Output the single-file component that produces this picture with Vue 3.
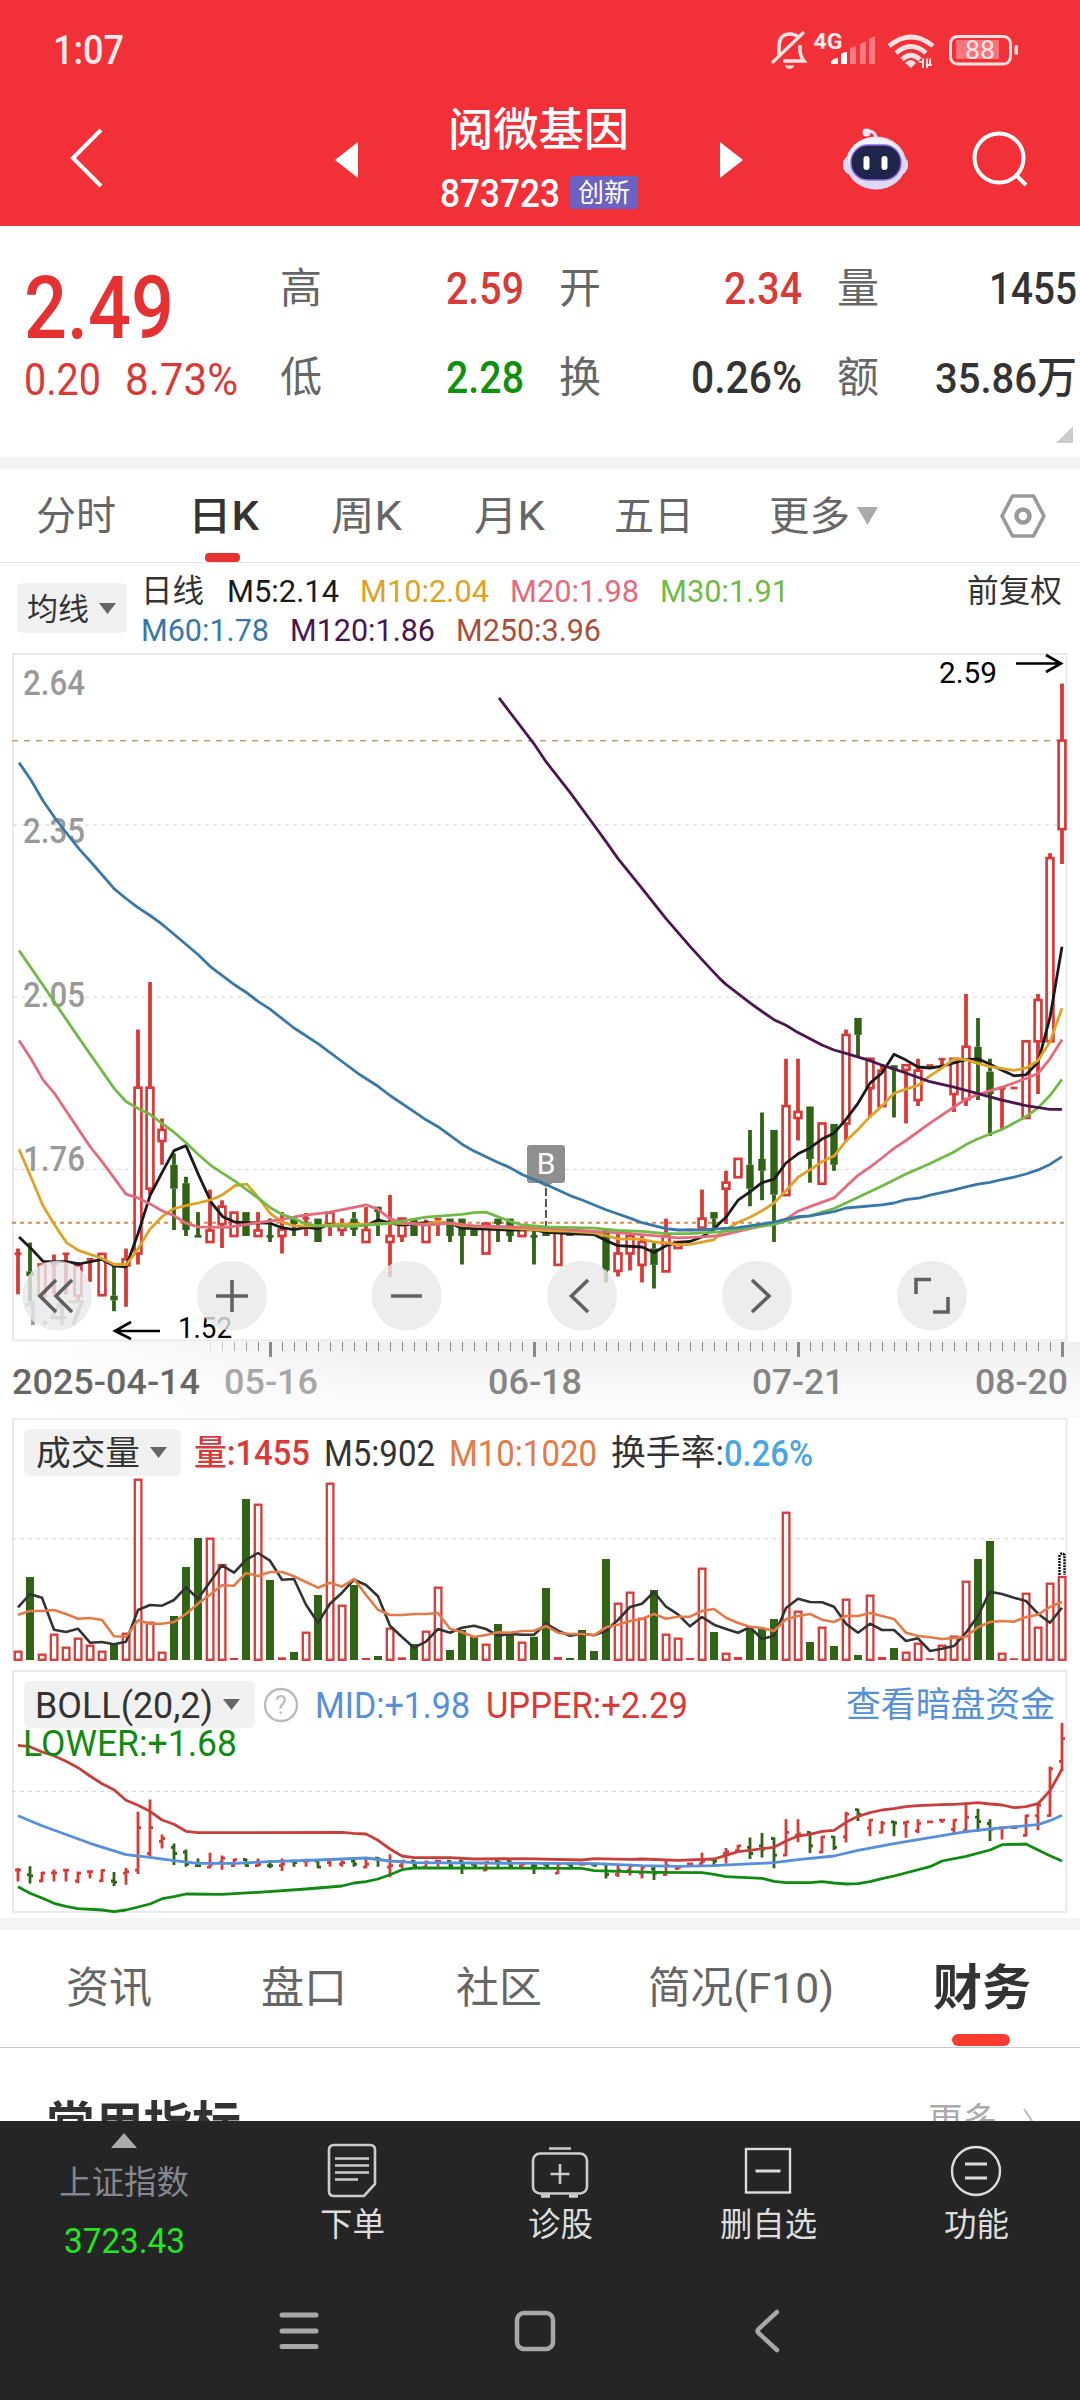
<script setup>
import { h } from 'vue'

// Single line of text fitted to a known advance width.
const Fit = (p) =>
  h('svg', { class: 'fit', width: p.w, height: p.s }, [
    h('text', {
      x: 0, y: p.s * 0.86, 'font-size': p.s, 'font-weight': p.b || 400, fill: p.c || '#333',
      textLength: p.w, lengthAdjust: 'spacingAndGlyphs',
    }, p.t),
  ])
Fit.props = ['t', 's', 'w', 'c', 'b']

const RED = '#d83a38', GREEN = '#316317'
const n1 = (v) => Math.round(v * 10) / 10
const cx = (i) => 18 + 12 * i
const ky = (v) => n1(v / 2.1778 - 10)

// [direction, body top, body bottom, high, low]
const days = [
  'r 1336 1336 1325 1425', 'g 1375 1385 1312 1440', 'r 1360 1428', 'r 1359 1359 1338 1425', 'r 1336 1336 1336 1425',
  'r 1362 1428 1355 1438', 'r 1348 1348 1348 1398', 'r 1337 1427', 'g 1428 1438 1360 1462', 'r 1349 1362 1325 1452',
  'r 975 1336 848 1360', 'r 975 1195 745 1208', 'r 1067 1091 1042 1143', 'g 1143 1195 1118 1285', 'g 1183 1285 1169 1298',
  'g 1298 1298 1246 1298', 'r 1286 1311 1197 1311', 'r 1234 1272 1220 1324', 'r 1247 1298', 'g 1246 1298',
  'r 1286 1298 1246 1298', 'g 1298 1298 1260 1311', 'r 1284 1298 1246 1336', 'g 1260 1272 1260 1298', 'r 1259 1259 1248 1298',
  'g 1260 1311', 'r 1247 1272 1247 1298', 'r 1272 1285 1260 1298', 'g 1260 1285 1246 1298', 'r 1285 1311 1235 1311',
  'g 1234 1246 1234 1298', 'r 1298 1311 1209 1387', 'r 1260 1298 1260 1311', 'g 1260 1298', 'r 1272 1311 1262 1311',
  'r 1260 1260 1260 1298', 'g 1260 1298 1260 1311', 'g 1260 1298 1260 1360', 'g 1285 1298', 'r 1271 1336',
  'g 1260 1272 1260 1311', 'g 1260 1298 1260 1311', 'r 1285 1298', 'g 1298 1298 1285 1360', 'g 1285 1298',
  'r 1285 1361', 'g 1285 1298', 'r 1287 1287', 'g 1287 1296', 'g 1285 1373 1285 1399',
  'r 1336 1374 1290 1386', 'r 1298 1336 1290 1373', 'r 1311 1361 1298 1399', 'g 1325 1361 1312 1412', 'r 1298 1375 1260 1375',
  'r 1311 1324', 'r 1284 1284', 'r 1260 1280 1197 1280', 'g 1246 1260 1246 1285', 'r 1182 1195 1156 1272',
  'r 1130 1170', 'g 1143 1195 1067 1233', 'g 1130 1156 1029 1220', 'g 1067 1208 1067 1311', 'r 1015 1209 912 1209',
  'r 1028 1041 912 1090', 'g 1016 1130 1016 1182', 'r 1053 1184', 'g 1054 1143 1054 1156', 'r 860 1053 848 1092',
  'g 823 860 823 910', 'r 912 976 912 1040', 'r 938 1015 927 1015', 'g 926 936 926 1040', 'r 926 936 926 1053',
  'r 938 1002 912 1015', 'r 926 926', 'r 912 912 912 926', 'r 912 989 912 1028', 'r 886 1000 771 1015',
  'g 886 923 823 1002', 'g 940 989 912 1080', 'r 976 976 976 1067', 'r 975 975', 'r 874 1041',
  'r 784 874 771 989', 'r 475 874 464 874', 'r 219 412 95 488',
].map((row, i) => {
  const [d, t, b, hi, lo] = row.split(' ')
  const top = +t, bot = +b
  return { i, x: cx(i), up: d === 'r', top, bot, hi: hi ? +hi : top, lo: lo ? +lo : bot }
})

const candles = days.map((d) => {
  const t = ky(d.top), b = ky(d.bot), hi = ky(d.hi), lo = ky(d.lo)
  let wick = ''
  if (t - hi > 0.5) wick += `M${d.x} ${hi}V${t}`
  if (lo - b > 0.5) wick += `M${d.x} ${b}V${lo}`
  const flat = b - t < 1.5
  return { ...d, wick, flat, t: n1(t), h: n1(Math.max(b - t, 2)) }
})

// Moving averages; each third of the chart is listed separately.
const trace = (...parts) =>
  parts.map((s, k) => s.trim().split(/\s+/).map((p) => {
    const [x, y] = p.split(',')
    const off = parts.length === 3 ? k : k + 1
    return n1(off * 360 + x / 3) + ',' + ky(+y)
  }).join(' ')).join(' ')

const averages = [
  ['#1a1a1a', trace(
    '57,1300 93,1325 129,1353 200,1354 237,1359 306,1349 343,1363 378,1365 414,1293 450,1210 486,1160 522,1112 558,1101 594,1162 634,1225 668,1256 706,1268 810,1270 846,1280 882,1284 918,1279 954,1282 990,1272',
    '18,1275 54,1263 90,1270 126,1274 198,1269 270,1270 306,1281 450,1285 522,1284 558,1290 630,1293 702,1295 738,1308 774,1319 846,1322 882,1334 918,1319 954,1312 990,1310 1026,1300 1062,1283',
    '0,1269 18,1257 54,1220 90,1202 126,1182 162,1174 198,1139 234,1119 270,1106 306,1087 342,1074 378,1044 414,1009 450,965 486,943 522,902 558,915 594,930 630,932 668,928 702,921 738,914 774,912 810,924 846,937 882,949 918,947 954,920 990,822 1026,668')],
  ['#dda226', trace(
    '57,1109 93,1170 129,1232 165,1275 200,1313 237,1330 280,1340 306,1347 343,1360 380,1360 414,1326 450,1283 486,1256 522,1238 558,1232 594,1226 634,1219 668,1208 706,1188 740,1185 774,1213 810,1248 846,1268 882,1276 954,1276 1018,1272',
    '18,1273 90,1270 198,1272 234,1266 306,1275 450,1281 558,1286 630,1288 702,1291 738,1297 774,1304 846,1305 882,1311 918,1313 954,1317 990,1316 1026,1311 1062,1306',
    '0,1292 18,1284 54,1268 90,1257 126,1243 162,1226 198,1199 234,1170 270,1154 306,1136 342,1124 378,1091 414,1066 450,1038 486,1015 522,987 558,978 594,970 630,949 668,931 702,912 738,914 774,922 810,929 882,937 918,932 954,916 990,875 1026,802')],
  ['#e56a7c', trace(
    '57,872 93,912 129,958 162,986 234,1064 270,1103 306,1136 378,1207 414,1215 450,1228 486,1243 522,1254 558,1270 594,1278 680,1279 774,1269 846,1262 900,1254 990,1246',
    '0,1233 18,1230 54,1240 90,1260 126,1269 198,1274 270,1270 342,1276 450,1278 558,1281 702,1288 800,1292 882,1297 954,1302 1026,1300',
    '0,1297 54,1288 90,1282 162,1270 200,1260 234,1244 270,1234 342,1215 378,1190 414,1166 450,1148 486,1128 522,1107 558,1090 630,1052 702,1017 738,1000 774,990 846,974 918,955 954,944 990,912 1026,870')],
  ['#70ba47', trace(
    '57,676 129,752 237,867 343,977 378,1005 414,1020 450,1033 486,1053 522,1072 558,1095 594,1120 634,1145 706,1179 774,1215 810,1236 846,1251 882,1260 918,1272 954,1276 1062,1277',
    '90,1270 198,1257 306,1251 342,1247 378,1246 414,1256 450,1266 486,1274 558,1278 702,1281 774,1286 846,1288 918,1293 990,1293',
    '0,1289 54,1284 90,1280 162,1273 234,1258 270,1254 342,1238 378,1226 486,1189 558,1163 630,1140 702,1115 738,1099 774,1086 846,1066 918,1038 954,1019 990,992 1026,957')],
  ['#3878a6', trace(
    '57,267 93,305 129,350 170,393 237,455 272,483 343,542 378,563 414,583 450,600 486,619 522,641 594,685 634,713 706,752 738,767 774,787 810,804 882,845 954,879 1026,918',
    '0,947 54,972 90,992 162,1027 198,1045 234,1060 306,1098 342,1113 414,1138 450,1149 486,1164 558,1186 630,1210 668,1220 738,1241 810,1259 846,1269 918,1282 954,1285 1020,1285',
    '0,1282 54,1280 162,1268 234,1256 270,1254 342,1245 378,1237 486,1230 522,1226 558,1219 600,1215 630,1209 700,1198 738,1191 774,1185 810,1181 846,1175 882,1170 918,1163 954,1154 990,1142 1026,1125')],
  ['#4b1650', trace(
    '417,126 522,226 558,265 630,332 704,405 738,439 774,476 846,541 918,607 990,667 1026,696',
    '0,738 18,750 90,790 126,809 162,827 198,839 234,855 306,882 342,893 378,900 450,916 486,926 558,943 630,962 702,974 774,988 846,1002 918,1014 990,1022 1026,1022')],
]

const priceMarks = [['2.64', 23, 43], ['2.35', 23, 191], ['2.05', 23, 355], ['1.76', 23, 519], ['1.47', 23, 673]]
const gridLines = [403, 778, 1153].map(ky)

// Volume tops, in thirds of a pixel from the panel's origin.
const vy = (v) => n1(v / 3 - 98)
const volume = (
  '992 771 1001 941 980 953 974 992 974 938 476 905 995 888 741 654 653 732 1014 537 551 780 1012 996 935 825 488 854 795 1014 ' +
  '1008 923 1012 972 932 800 990 930 948 971 912 943 965 950 804 1011 1014 930 993 717 848 815 893 810 941 953 1014 743 936 998 ' +
  '1011 927 927 897 575 872 966 920 978 836 1005 824 1011 984 995 968 1015 974 947 782 717 663 998 1015 818 920 788 768'
).split(' ').map((v, i) => {
  const y = vy(+v)
  return { i, x: cx(i), y, h: n1(242 - y), up: !(
    [1, 8, 13, 14, 15, 19, 21, 23, 25, 28, 30, 33, 36, 37, 38, 40, 41, 43, 44, 46, 47, 48, 49, 53, 58, 61, 62, 63, 66, 68, 70, 73, 80, 81].includes(i)) }
})
const vline = (s) => s.split(' ').map((v, i) => cx(i) + ',' + vy(+v)).join(' ')
const vol5 = vline('862 822 833 929 936 926 968 966 973 965 870 855 857 840 802 836 786 736 758 720 699 722 779 777 854 908 851 818 779 795 829 917 951 983 965 927 938 923 917 927 947 942 944 944 911 932 947 941 946 932 900 861 851 816 860 883 919 891 914 927 938 922 957 947 864 836 846 847 860 911 938 911 930 930 963 955 993 986 978 938 887 815 822 833 843 881 908 863')
const vol10 = vline('884 873 873 870 882 896 894 900 949 950 901 911 911 906 882 851 824 796 797 759 768 756 756 769 786 803 788 800 777 825 869 885 885 882 882 879 926 937 951 945 937 938 933 932 918 938 942 942 946 922 914 903 897 882 896 890 890 873 867 893 909 920 924 933 898 888 882 899 906 888 888 879 888 897 938 948 952 957 954 950 922 906 903 905 891 884 861 845')

// Bollinger panel
const by = (v) => n1(v / 3 - 10)
const bar = (v) => by(192 + (v - 95) * 0.3533)
const ohlc = days.map((d) => {
  const o = bar(d.up ? d.bot : d.top), c = bar(d.up ? d.top : d.bot)
  return { i: d.i, up: d.up, d: `M${d.x} ${bar(d.hi) - 1}V${bar(d.lo) + 1}M${d.x - 3} ${o}H${d.x}M${d.x} ${c}H${d.x + 3}` }
})
const bline = (s) => s.split(' ').map((p) => { const [i, v] = p.split(','); return cx(+i) + ',' + by(+v) }).join(' ')
const bands = [
  ['#c63f3c', bline('0,256 1,260 2,276 3,287 4,304 5,323 6,348 7,371 8,389 9,421 10,436 11,454 12,480 13,493 14,514 15,518 17,518 27,517 28,520 29,522 30,541 31,567 32,588 33,593 36,593 38,597 42,596 47,600 48,596 51,598 52,597 55,601 58,597 59,586 60,575 61,571 62,566 63,562 64,543 65,528 66,523 67,514 68,511 69,487 70,469 71,458 72,450 73,446 74,440 75,437 77,434 78,433 79,431 80,428 81,432 82,435 83,443 84,440 85,431 86,392 87,328')],
  ['#118a11', bline('0,680 1,700 2,714 3,730 4,739 5,746 7,750 8,755 9,750 11,732 12,716 13,710 14,702 17,703 18,701 20,697 24,687 27,678 28,669 29,665 30,657 31,644 32,629 33,624 47,625 48,632 53,637 57,638 58,643 59,650 62,655 63,664 64,668 66,668 67,665 68,669 69,672 70,671 71,665 72,656 73,648 76,620 77,603 79,589 81,570 82,554 84,552 85,570 86,587 87,603')],
  ['#5590d8', bline('0,467 2,497 6,550 9,584 11,592 13,602 15,610 18,610 21,605 25,600 29,594 31,603 33,608 48,611 52,617 55,619 58,617 63,608 65,599 68,588 70,571 73,551 76,533 79,515 81,507 83,500 85,494 86,482 87,466')],
]

const ticks = Array.from({ length: 72 }, (_, k) => k + 16)
const pads = [57, 232, 406.7, 582, 757, 932]
</script>

<template>
  <div class="page">
    <header class="top">
      <div class="status">
        <Fit t="1:07" :s="40" :w="71" c="#ffeaea" b="500" />
        <svg width="300" height="60" viewBox="0 0 300 60">
          <g fill="none" stroke="#ffe1e1" stroke-width="3.600">
            <path d="M23 42L53 13" stroke-linecap="round" stroke-width="3.200" />
            <path d="M29 35V27Q29 14 40 14Q45 14 48 17M50 25V30Q50 36 54 41H33" />
            <path d="M35 46Q40 51 44 46Z" fill="#ffe1e1" stroke-width="1" />
            <path d="M139 26Q161 8 183 26M146 33Q161 20 176 33M152 39.500Q161 31 170 39.500" stroke-width="4.600" />
            <rect x="200.500" y="16.500" width="60" height="27.500" rx="7" stroke-width="3" />
          </g>
          <path d="M155 43Q161 37 166 43L161 48Z" fill="#ffe1e1" />
          <path d="M169 42H173M173 38.500V48M177 38.500V48M177 45H182M180 38.500V44" stroke="#ffe1e1" stroke-width="2" fill="none" />
          <rect x="206" y="20" width="43" height="19" fill="#f9747a" />
          <rect x="264.500" y="25" width="3.500" height="10" rx="1.500" fill="#ffe1e1" />
          <path d="M81 44V41Q84 38 88 38V44ZM91 44V34Q93 32 97 32V44Z" fill="#fff" />
          <path d="M100 44V28L106 26V44ZM110 44V24L116 21V44ZM119 44V19L125 16V44Z" fill="#f97b80" />
          <text x="63.500" y="28.500" font-size="22.500" font-weight="700" fill="#ffeaea" textLength="29" lengthAdjust="spacingAndGlyphs">4G</text>
          <text x="215" y="39" font-size="25" fill="#ffeaea" textLength="30" lengthAdjust="spacingAndGlyphs">88</text>
        </svg>
      </div>
      <div class="nav">
        <svg class="back" width="36" height="64" viewBox="0 0 36 64"><path d="M32 4L4 32L32 60" fill="none" stroke="#fff" stroke-width="4" /></svg>
        <svg class="step" width="23" height="36" viewBox="0 0 23 36"><path d="M0 18L23 0V36Z" fill="#fff" /></svg>
        <div class="title">
          <Fit t="阅微基因" :s="45" :w="181" c="#fff" b="500" />
          <div class="code"><Fit t="873723" :s="38" :w="120" c="#fff" b="500" /><span class="badge"><Fit t="创新" :s="26" :w="52" c="#fff" /></span></div>
        </div>
        <svg class="step" width="23" height="36" viewBox="0 0 23 36"><path d="M23 18L0 0V36Z" fill="#fff" /></svg>
        <svg class="robot" width="68" height="64" viewBox="0 0 68 64">
          <path d="M34 12Q34 4 26 4" fill="none" stroke="#e4def8" stroke-width="3" />
          <circle cx="24.500" cy="5.500" r="4" fill="#efeafb" />
          <rect x="1" y="28" width="65" height="20" rx="9" fill="#dcd8f5" />
          <ellipse cx="34" cy="36" rx="30" ry="26.500" fill="#ddd9f6" />
          <ellipse cx="33" cy="32" rx="27" ry="21" fill="#f3f1fc" />
          <rect x="9" y="18" width="50" height="35" rx="17" fill="#20254c" stroke="#8a6be0" stroke-width="1.500" />
          <rect x="21.500" y="29" width="6" height="14" rx="3" fill="#fff" /><rect x="39.500" y="29" width="6" height="14" rx="3" fill="#fff" />
        </svg>
        <svg class="search" width="58" height="58" viewBox="0 0 58 58"><circle cx="27" cy="27" r="24.500" fill="none" stroke="#fff" stroke-width="4" /><path d="M43 43L54 54" stroke="#fff" stroke-width="4" /></svg>
      </div>
    </header>

    <section class="quote">
      <div class="price">
        <Fit t="2.49" :s="87" :w="150" c="#e53131" b="500" />
        <div class="chg"><Fit t="0.20" :s="44" :w="77" :c="RED" /><Fit t="8.73%" :s="44" :w="113" :c="RED" /></div>
      </div>
      <div class="stats">
        <div><Fit t="高" :s="42" :w="42" c="#666" /><Fit t="2.59" :s="44" :w="78" :c="RED" b="500" /></div>
        <div><Fit t="开" :s="42" :w="42" c="#666" /><Fit t="2.34" :s="44" :w="78" :c="RED" b="500" /></div>
        <div><Fit t="量" :s="42" :w="42" c="#666" /><Fit t="1455" :s="44" :w="88" b="500" /></div>
        <div><Fit t="低" :s="42" :w="42" c="#666" /><Fit t="2.28" :s="44" :w="78" c="#109010" b="500" /></div>
        <div><Fit t="换" :s="42" :w="42" c="#666" /><Fit t="0.26%" :s="44" :w="111" b="500" /></div>
        <div><Fit t="额" :s="42" :w="42" c="#666" /><Fit t="35.86万" :s="43" :w="142" b="500" /></div>
      </div>
      <svg class="corner" width="17" height="17" viewBox="0 0 17 17"><path d="M17 0V17H0Z" fill="#ccc" /></svg>
    </section>
    <div class="gap"></div>

    <nav class="periods">
      <Fit t="分时" :s="40" :w="80" c="#666" />
      <div class="on"><Fit t="日K" :s="40" :w="71" b="500" /></div>
      <Fit t="周K" :s="40" :w="71" c="#666" />
      <Fit t="月K" :s="40" :w="71" c="#666" />
      <Fit class="five" t="五日" :s="40" :w="80" c="#666" />
      <div class="more"><Fit t="更多" :s="40" :w="81" c="#666" /><svg width="21" height="18" viewBox="0 0 21 18"><path d="M0 0H21L10.500 18Z" fill="#aaa" /></svg></div>
      <svg class="gear" width="46" height="44" viewBox="0 0 46 44"><path d="M12.500 2H33.500L44 22L33.500 42H12.500L2 22Z" fill="none" stroke="#999" stroke-width="3.600" stroke-linejoin="round" /><circle cx="23" cy="22" r="6.500" fill="none" stroke="#999" stroke-width="4.500" /></svg>
    </nav>

    <section class="ma">
      <div class="pill ma-pill"><Fit t="均线" :s="31" :w="62" /><svg width="17" height="11" viewBox="0 0 17 11"><path d="M0 0H17L8.500 11Z" fill="#666" /></svg></div>
      <div class="ma-list">
        <div><Fit class="kind" t="日线" :s="32" :w="63" /><Fit t="M5:2.14" :s="32" :w="112" c="#1a1a1a" /><Fit t="M10:2.04" :s="32" :w="129" c="#dda226" /><Fit t="M20:1.98" :s="32" :w="129" c="#e56a7c" /><Fit t="M30:1.91" :s="32" :w="129" c="#70ba47" /></div>
        <div><Fit t="M60:1.78" :s="32" :w="128" c="#3878a6" /><Fit t="M120:1.86" :s="32" :w="145" c="#4b1650" /><Fit t="M250:3.96" :s="32" :w="145" c="#a8503c" /></div>
      </div>
      <Fit class="adj" t="前复权" :s="32" :w="95" />
    </section>

    <section class="kline">
      <svg width="1080" height="692" viewBox="0 0 1080 692">
        <rect x="13" y="4" width="1053.500" height="686.500" fill="none" stroke="#e9e9e9" stroke-width="2" />
        <path v-for="y in gridLines" :key="y" :d="`M13 ${y}H1062`" stroke="#dedede" stroke-width="1.300" stroke-dasharray="4 4" />
        <path d="M12 90.700H1062" stroke="#c0a068" stroke-width="1.600" stroke-dasharray="6 6" />
        <path d="M12 572.700H1064" stroke="#d98a4e" stroke-width="2" stroke-dasharray="4 4" />
        <text v-for="m in priceMarks" :key="m[0]" :x="m[1]" :y="m[2] + 2" font-size="35" font-weight="500" fill="#999" textLength="62" lengthAdjust="spacingAndGlyphs">{{ m[0] }}</text>
        <g v-for="c in candles" :key="c.i">
          <path v-if="c.wick" :d="c.wick" :stroke="c.up ? RED : GREEN" stroke-width="3.800" />
          <rect v-if="c.flat" :x="c.x - 3.500" :y="c.t - 1" width="7" height="2.600" :fill="c.up ? RED : GREEN" />
          <rect v-else-if="c.up" :x="c.x - 3.400" :y="c.t" width="6.800" :height="c.h" fill="#fff" :stroke="RED" stroke-width="2.700" />
          <rect v-else :x="c.x - 3.700" :y="c.t" width="7.400" :height="c.h" :fill="GREEN" />
        </g>
        <path d="M546 538V576" stroke="#555" stroke-width="2" stroke-dasharray="8 3" />
        <path d="M530 495H562Q565 495 565 498V530Q565 533 562 533H553L546 537L539 533H530Q527 533 527 530V498Q527 495 530 495Z" fill="#8f8f8f" />
        <polyline v-for="a in averages" :key="a[0]" :points="a[1]" fill="none" :stroke="a[0]" stroke-width="2.800" stroke-linejoin="round" />
        <text x="546" y="524" font-size="30" text-anchor="middle" fill="#fff">B</text>
        <g font-size="29" fill="#000">
          <text x="178" y="688" textLength="54" lengthAdjust="spacingAndGlyphs">1.52</text>
          <text x="939" y="33" textLength="58" lengthAdjust="spacingAndGlyphs">2.59</text>
        </g>
        <path d="M160 681H115M131 672L115 681L131 689M1016 13.500H1061M1046 5L1061 13.500L1046 22" fill="none" stroke="#000" stroke-width="2.600" />
        <circle v-for="x in pads" :key="x" :cx="x" cy="645.700" r="35" fill="#e8e8e8" fill-opacity=".8" />
        <g fill="none" stroke="#606060" stroke-width="3.600">
          <path d="M56 630L40 646L56 662M72 630L56 646L72 662M216 646H248M232 630V662M391 646H422M588 630L571.500 646L588 662M752 630L769 646L752 662" />
          <path d="M916 644V629.500H931M933 662H948V647" />
        </g>
      </svg>
    </section>

    <section class="axis">
      <svg width="1080" height="18" viewBox="0 0 1080 18">
        <path v-for="i in ticks" :key="i" :d="`M${cx(i)}.500 0V${(i - 21) % 22 ? 9 : 15}`" :stroke-width="(i - 21) % 22 ? 1 : 3" stroke="#888" :opacity="Math.min(1, (i - 15) / 5)" />
      </svg>
      <div class="dates">
        <Fit t="2025-04-14" :s="35" :w="188" c="#666" b="500" />
        <Fit t="05-16" :s="35" :w="94" c="#999" b="500" />
        <Fit t="06-18" :s="35" :w="94" c="#858585" b="500" />
        <Fit t="07-21" :s="35" :w="92" c="#858585" b="500" />
        <Fit t="08-20" :s="35" :w="93" c="#858585" b="500" />
      </div>
    </section>

    <section class="panel vol">
      <svg class="plot" width="1080" height="252" viewBox="0 0 1080 252">
        <path d="M13 242V0.500H1066.500V242" fill="none" stroke="#e9e9e9" stroke-width="2" />
        <path d="M13 241.500H1066" stroke="#eee" stroke-width="1.500" /><path d="M12 120.700H1065" stroke="#dadada" stroke-width="1.200" stroke-dasharray="4 4" />
        <g v-for="b in volume" :key="b.i">
          <rect v-if="b.up && b.h > 4" :x="b.x - 3.200" :y="b.y + 1" width="6.600" :height="b.h - 1.200" fill="#fff" :stroke="RED" stroke-width="2.300" />
          <rect v-else :x="b.x - 4" :y="b.y" width="8" :height="b.h" :fill="b.up ? RED : GREEN" />
        </g>
        <path d="M1059.500 157V137Q1062 134 1064.500 137V157" fill="none" stroke="#000" stroke-width="2.400" stroke-dasharray="2 1" />
        <polyline :points="vol5" fill="none" stroke="#333" stroke-width="2.600" stroke-linejoin="round" />
        <polyline :points="vol10" fill="none" stroke="#e37a47" stroke-width="2.600" stroke-linejoin="round" />
      </svg>
      <div class="legend">
        <div class="pill"><Fit t="成交量" :s="34.500" :w="104" /><svg width="17" height="11" viewBox="0 0 17 11"><path d="M0 0H17L8.500 11Z" fill="#666" /></svg></div>
        <Fit t="量:1455" :s="35" :w="116" :c="RED" b="500" /><Fit t="M5:902" :s="36" :w="111" /><Fit t="M10:1020" :s="36" :w="148" c="#e37a47" />
        <div class="turn"><Fit t="换手率:" :s="35" :w="113" /><Fit t="0.26%" :s="36" :w="89" c="#4ba6e0" b="500" /></div>
      </div>
    </section>

    <section class="panel boll">
      <svg class="plot" width="1080" height="248" viewBox="0 0 1080 248">
        <rect x="13" y="1" width="1053.500" height="241" fill="none" stroke="#e9e9e9" stroke-width="2" />
        <path d="M12 121.300H1065" stroke="#dadada" stroke-width="1.200" stroke-dasharray="4 4" />
        <path v-for="o in ohlc" :key="o.i" :d="o.d" fill="none" :stroke="o.up ? RED : GREEN" stroke-width="2.800" />
        <polyline v-for="b in bands" :key="b[0]" :points="b[1]" fill="none" :stroke="b[0]" stroke-width="2.800" stroke-linejoin="round" />
      </svg>
      <div class="legend">
        <div class="pill"><Fit t="BOLL(20,2)" :s="36" :w="178" /><svg width="17" height="11" viewBox="0 0 17 11"><path d="M0 0H17L8.500 11Z" fill="#666" /></svg></div>
        <svg class="help" width="36" height="36" viewBox="0 0 36 36"><circle cx="18" cy="18" r="16" fill="none" stroke="#bbb" stroke-width="2.400" /><text x="18" y="26.500" font-size="25" text-anchor="middle" fill="#bbb">?</text></svg>
        <Fit t="MID:+1.98" :s="36" :w="155" c="#5590d8" /><Fit t="UPPER:+2.29" :s="36" :w="202" :c="RED" />
        <Fit class="dark-pool" t="查看暗盘资金" :s="35" :w="209" c="#5590d8" />
      </div>
      <Fit class="lower" t="LOWER:+1.68" :s="36" :w="214" c="#118a11" />
    </section>
    <div class="gap"></div>

    <nav class="tabs">
      <Fit t="资讯" :s="43" :w="86" c="#666" /><Fit t="盘口" :s="43" :w="86" c="#666" /><Fit t="社区" :s="43" :w="86" c="#666" />
      <Fit class="brief" t="简况(F10)" :s="43" :w="186" c="#666" /><div class="on"><Fit t="财务" :s="49" :w="98" b="700" /></div>
    </nav>
    <section class="peek">
      <Fit t="常用指标" :s="49" :w="195" b="700" />
      <div class="all"><Fit t="更多" :s="35" :w="69" c="#aaa" /><svg width="14" height="36" viewBox="0 0 14 36"><path d="M3 6L11 18L3 30" fill="none" stroke="#bbb" stroke-width="2" /></svg></div>
    </section>

    <footer class="bottom">
      <div class="actions">
        <div class="index">
          <svg width="26" height="15" viewBox="0 0 26 15"><path d="M13 0L26 15H0Z" fill="#aaa" /></svg>
          <Fit t="上证指数" :s="32.500" :w="130" c="#868690" />
          <Fit t="3723.43" :s="35" :w="121" c="#22e622" />
        </div>
        <div class="act">
          <svg width="60" height="56" viewBox="0 0 60 56"><g fill="none" stroke="#ccc" stroke-width="2.600"><path d="M12 2H48Q53 2 53 7V41L42 53H12Q7 53 7 48V7Q7 2 12 2Z" /><path d="M13 15.500H47M13 22.500H47M13 29.500H47M13 36.500H36" /></g></svg>
          <Fit t="下单" :s="32.500" :w="65" c="#ddd" />
        </div>
        <div class="act">
          <svg width="60" height="56" viewBox="0 0 60 56"><g fill="none" stroke="#ccc" stroke-width="2.600"><rect x="3" y="10.500" width="54" height="40" rx="7" /><path d="M19 5.500H41M30 21V41M20.500 31H39.500" /><path d="M11 53H20M39 53H48" stroke-width="3.500" /></g></svg>
          <Fit t="诊股" :s="32.500" :w="65" c="#ddd" />
        </div>
        <div class="act">
          <svg width="60" height="56" viewBox="0 0 60 56"><g fill="none" stroke="#ddd" stroke-width="2.400"><rect x="8" y="6" width="44" height="43.500" /><path d="M17.500 28H42.500" stroke-width="3" /></g></svg>
          <Fit t="删自选" :s="32.500" :w="97" c="#ddd" />
        </div>
        <div class="act">
          <svg width="60" height="56" viewBox="0 0 60 56"><g fill="none" stroke="#ddd" stroke-width="2.400"><circle cx="30" cy="28" r="24" /><path d="M19 21H41M19 35H41" stroke-width="3" /></g></svg>
          <Fit t="功能" :s="32.500" :w="65" c="#ddd" />
        </div>
      </div>
      <div class="sys">
        <svg width="40" height="44" viewBox="0 0 40 44"><path d="M3 6H37M3 22H37M3 37.500H37" stroke="#a8a8a8" stroke-width="5" stroke-linecap="round" /></svg>
        <svg width="44" height="44" viewBox="0 0 44 44"><rect x="4" y="4" width="36" height="36" rx="7" fill="none" stroke="#a8a8a8" stroke-width="4.500" /></svg>
        <svg width="30" height="44" viewBox="0 0 30 44"><path d="M25 3L6.500 20Q4.500 22 6.500 24L25 41" fill="none" stroke="#a8a8a8" stroke-width="4.500" stroke-linecap="round" /></svg>
      </div>
    </footer>
  </div>
</template>

<style>
body { background: #fff; }
.fit { display: block; flex: none; overflow: visible; }
</style>
<style scoped>
.page { width: 1080px; height: 2400px; overflow: hidden; background: #fff; font-family: Roboto, "Noto Sans CJK SC", sans-serif; display: flex; flex-direction: column; }
.page svg { display: block; flex: none; }
.top { height: 226px; background: #f13038; }
.status { height: 98px; box-sizing: border-box; padding: 20px 30px 0 53px; display: flex; justify-content: space-between; }
.status .fit { margin-top: 10px; }
.nav { height: 128px; display: grid; grid-template-columns: 335px 105px 280px 122px 130px 108px; align-items: center; }
.back { margin: 0 0 8px 69px; }
.step { margin-bottom: 5px; }
.robot { margin-bottom: 7px; }
.search { margin-bottom: 4px; }
.title { display: flex; flex-direction: column; gap: 20px; padding: 0 0 4px 8px; }
.code { display: flex; align-items: center; gap: 10px; margin-left: -8px; height: 42px; }
.badge { width: 68px; height: 33px; border-radius: 3px; background: #6c62c4; display: flex; align-items: center; justify-content: center; }
.quote { height: 231px; position: relative; display: flex; }
.price { width: 280px; padding-top: 37px; box-sizing: border-box; display: flex; flex-direction: column; gap: 7px; padding-left: 24px; }
.chg { display: flex; gap: 24px; }
.stats { display: grid; grid-template-columns: 244px 243px 240px; column-gap: 35px; grid-template-rows: 90px 88px; padding-top: 17px; height: 178px; }
.stats > div { display: flex; align-items: center; justify-content: space-between; }
.corner { position: absolute; right: 7px; bottom: 14px; }
.gap { height: 12px; background: #f4f4f4; flex: none; }
.periods { height: 94px; box-sizing: border-box; border-bottom: 1px solid #e3e3e3; display: flex; align-items: center; gap: 72px; padding: 0 34px 0 36px; }
.on { position: relative; }
.periods .on::after { content: ""; position: absolute; left: 17px; top: 57px; width: 35px; height: 9px; border-radius: 4px; background: #e53131; }
.five { margin-left: -3px; }
.more { display: flex; align-items: center; gap: 7px; margin-left: 3px; }
.gear { margin-left: auto; }
.ma { height: 87px; display: flex; padding: 0 18px 0 17px; box-sizing: border-box; }
.pill { background: #f1f1f1; border-radius: 6px; display: flex; align-items: center; justify-content: space-between; }
.ma-pill { width: 110px; height: 50px; box-sizing: border-box; padding: 0 11px 0 10px; margin-top: 20px; }
.ma-list { padding: 11px 0 0 14px; display: flex; flex-direction: column; gap: 7px; }
.ma-list > div { display: flex; gap: 21px; }
.kind { margin-right: 2px; }
.adj { margin: 11px 0 0 auto; }
.kline { height: 692px; }
.axis { height: 76px; background: linear-gradient(90deg, #fff 1%, rgba(255, 255, 255, 0) 35%), linear-gradient(#efefef, #f9f9f9 60%, #fbfbfb); }
.dates { display: grid; grid-template-columns: 212px 264px 264px 223px 1fr; padding: 4px 0 0 12px; }
.dates .fit:nth-child(2) { opacity: .85; }
.panel { position: relative; }
.plot { position: absolute; left: 0; top: 0; }
.legend { position: relative; display: flex; align-items: center; padding: 11px 0 0 24px; }
.vol { height: 252px; }
.vol .legend { gap: 14px; }
.vol .pill { width: 157px; height: 47px; box-sizing: border-box; padding: 0 14px 0 12px; margin-right: -1px; }
.turn { display: flex; }
.boll { height: 248px; }
.boll .legend { padding-top: 11px; }
.boll .pill { width: 231px; height: 47px; box-sizing: border-box; padding: 0 15px 0 11px; }
.help { margin: 0 16px 0 8px; }
.boll .legend > .fit + .fit { margin-left: 16px; }
.boll .legend > .dark-pool.fit { margin: 0 25px 0 auto; }
.lower { position: relative; margin: -3px 0 0 23px; }
.tabs { height: 118px; box-sizing: border-box; border-bottom: 1px solid #c8c8c8; display: flex; gap: 109px; align-items: center; padding: 0 50px 2px 66px; }
.brief { margin-right: -10px; margin-left: -3px; }
.tabs .on { margin-left: auto; }
.tabs .on::after { content: ""; position: absolute; left: 19px; top: 71px; width: 58px; height: 12px; border-radius: 6px; background: #f93b30; }
.peek { height: 73px; overflow: hidden; display: flex; justify-content: space-between; align-items: flex-start; padding: 52px 45px 0 46px; box-sizing: border-box; }
.all { display: flex; gap: 24px; padding-top: 3px; }
.bottom { flex: 1; background: #252525; }
.actions { display: flex; height: 168px; }
.index { width: 248px; display: flex; flex-direction: column; align-items: center; padding-top: 12px; box-sizing: border-box; }
.index .fit:nth-child(2) { margin-top: 18px; }
.index .fit:nth-child(3) { margin-top: 24px; }
.act { width: 208px; display: flex; flex-direction: column; align-items: center; gap: 9px; padding-top: 22px; box-sizing: border-box; }
.sys { display: grid; grid-template-columns: 234px 239px 30px; padding: 20px 0 0 279px; }
</style>
